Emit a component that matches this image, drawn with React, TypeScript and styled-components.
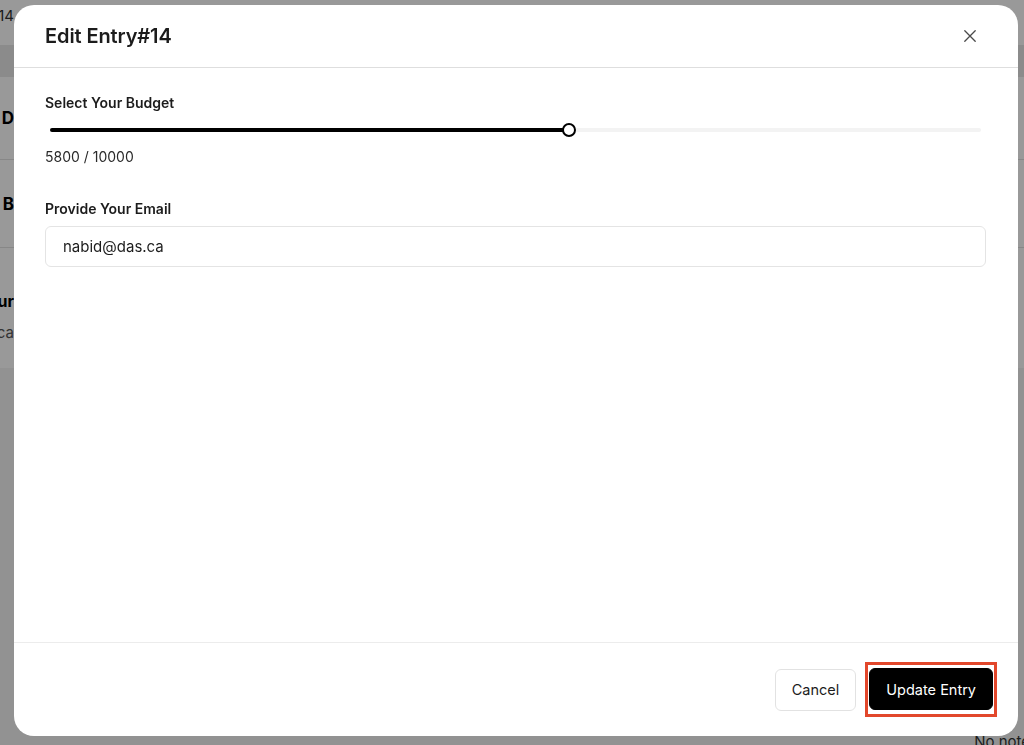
import React from 'react';
import styled, { createGlobalStyle } from 'styled-components';

const budget = { value: 5800, max: 10000, pct: 55.75 };

const App = () => {
  return (
    <>
      <GlobalStyle />
      <Page>
        <PageTop>
          <Clip><span>Entry#14</span></Clip>
        </PageTop>
        <PageBand />
        <PageRow>
          <Clip><strong>D</strong></Clip>
        </PageRow>
        <PageRow tall>
          <Clip><strong>B</strong></Clip>
        </PageRow>
        <PageNote>
          <Clip><strong>Your</strong></Clip>
          <Clip><small>das.ca</small></Clip>
        </PageNote>
        <PageRest>
          <NoNote>No notes</NoNote>
        </PageRest>
      </Page>

      <Overlay>
        <Modal>
          <Header>
            <Title>Edit Entry#14</Title>
            <CloseButton aria-label="Close">
              <svg width="12" height="12" viewBox="0 0 12 12" fill="none">
                <path d="M0.8 0.8 11.2 11.2 M11.2 0.8 0.8 11.2" stroke="#4a4a4a" strokeWidth="1.3" strokeLinecap="round" />
              </svg>
            </CloseButton>
          </Header>

          <Body>
            <Field>
              <Label>Select Your Budget</Label>
              <Slider>
                <Track>
                  <Fill style={{ width: `${budget.pct}%` }} />
                  <Thumb style={{ left: `${budget.pct}%` }} />
                </Track>
              </Slider>
              <Hint>{budget.value} / {budget.max}</Hint>
            </Field>

            <Field>
              <Label>Provide Your Email</Label>
              <Input defaultValue="nabid@das.ca" />
            </Field>
          </Body>

          <Footer>
            <Button>Cancel</Button>
            <Highlight>
              <Button primary>Update Entry</Button>
            </Highlight>
          </Footer>
        </Modal>
      </Overlay>
    </>
  );
};
export default App;

const GlobalStyle = createGlobalStyle`
  html, body {
    margin: 0;
    padding: 0;
    height: 100%;
    overflow: hidden;
  }
  body {
    font-family: Inter, "Noto Sans", "Liberation Sans", sans-serif;
    color: #1a1a1a;
    background: #fff;
  }
  * { box-sizing: border-box; }
`;

const Page = styled.div`
  width: 1024px;
  height: 745px;
  display: flex;
  flex-direction: column;
`;
const PageTop = styled.div`
  height: 45px;
  display: flex;
  align-items: flex-start;
  padding-top: 6px;
  font-size: 15px;
  color: #333;
`;
const PageBand = styled.div`
  height: 32px;
  background: #e8e8e8;
`;
const PageRow = styled.div<{ tall?: boolean }>`
  height: ${(p) => (p.tall ? '88px' : '83px')};
  display: flex;
  align-items: center;
  border-bottom: 1px solid #e2e2e2;
  font-size: 17px;
  color: #000;
`;
const PageNote = styled.div`
  height: 120px;
  padding-top: 16px;
  display: flex;
  flex-direction: column;
  justify-content: center;
  gap: 12px;
  font-size: 16px;
  color: #000;
  small { font-size: 15px; color: #555; }
`;
const PageRest = styled.div`
  flex: 1;
  background: #f4f4f4;
  display: flex;
  justify-content: flex-end;
  align-items: flex-end;
`;
const NoNote = styled.div`
  font-size: 15px;
  color: #333;
  margin-right: -14px;
  margin-bottom: -6px;
`;
const Clip = styled.div`
  width: 14px;
  overflow: hidden;
  display: flex;
  justify-content: flex-end;
  white-space: nowrap;
`;

const Overlay = styled.div`
  position: fixed;
  inset: 0;
  background: rgba(0, 0, 0, 0.4);
  display: flex;
  padding: 5px 6px 9px 14px;
`;
const Modal = styled.div`
  flex: 1;
  background: #fff;
  border-radius: 20px;
  display: flex;
  flex-direction: column;
  overflow: hidden;
`;
const Header = styled.div`
  height: 63px;
  padding: 0 32px 0 31px;
  display: flex;
  align-items: center;
  justify-content: space-between;
  border-bottom: 1px solid #dedede;
`;
const Title = styled.h2`
  margin: 0;
  font-size: 20px;
  font-weight: 600;
  color: #1c1c1c;
  letter-spacing: -0.1px;
`;
const CloseButton = styled.button`
  width: 24px;
  height: 24px;
  margin-right: 4px;
  border: none;
  background: none;
  padding: 0;
  display: flex;
  align-items: center;
  justify-content: center;
  cursor: pointer;
`;
const Body = styled.div`
  flex: 1;
  padding: 26px 32px 0 31px;
  display: flex;
  flex-direction: column;
  gap: 34px;
`;
const Field = styled.div`
  display: flex;
  flex-direction: column;
`;
const Label = styled.label`
  font-size: 14px;
  font-weight: 600;
  color: #1c1c1c;
  line-height: 18px;
`;
const Slider = styled.div`
  padding: 0 5px;
  height: 20px;
  margin-top: 8px;
  display: flex;
  align-items: center;
`;
const Track = styled.div`
  position: relative;
  flex: 1;
  height: 4px;
  border-radius: 2px;
  background: #f3f3f3;
`;
const Fill = styled.div`
  position: absolute;
  left: 0;
  top: 0;
  bottom: 0;
  background: #000;
  border-radius: 2px;
`;
const Thumb = styled.div`
  position: absolute;
  top: 50%;
  width: 14px;
  height: 14px;
  border-radius: 50%;
  background: #fff;
  border: 2px solid #000;
  transform: translate(-50%, -50%);
`;
const Hint = styled.div`
  margin-top: 8px;
  font-size: 14px;
  color: #2a2a2a;
  line-height: 18px;
`;
const Input = styled.input`
  margin-top: 8px;
  height: 41px;
  border: 1px solid #e4e4e4;
  border-radius: 6px;
  padding: 0 17px;
  font-family: inherit;
  font-size: 15px;
  color: #1c1c1c;
  outline: none;
`;
const Footer = styled.div`
  height: 94px;
  border-top: 1px solid #ececec;
  padding: 0 21px 0 31px;
  display: flex;
  align-items: center;
  justify-content: flex-end;
  gap: 9px;
`;
const Highlight = styled.div`
  display: flex;
  border: 3px solid #e2472b;
  padding: 3px 1px 4px 1px;
`;
const Button = styled.button<{ primary?: boolean }>`
  height: 42px;
  padding: 0 16px;
  border-radius: 6px;
  font-family: inherit;
  font-size: 14.5px;
  font-weight: 400;
  cursor: pointer;
  border: 1px solid ${(p) => (p.primary ? '#000' : '#e2e2e2')};
  background: ${(p) => (p.primary ? '#000' : '#fff')};
  color: ${(p) => (p.primary ? '#fff' : '#1c1c1c')};
`;
